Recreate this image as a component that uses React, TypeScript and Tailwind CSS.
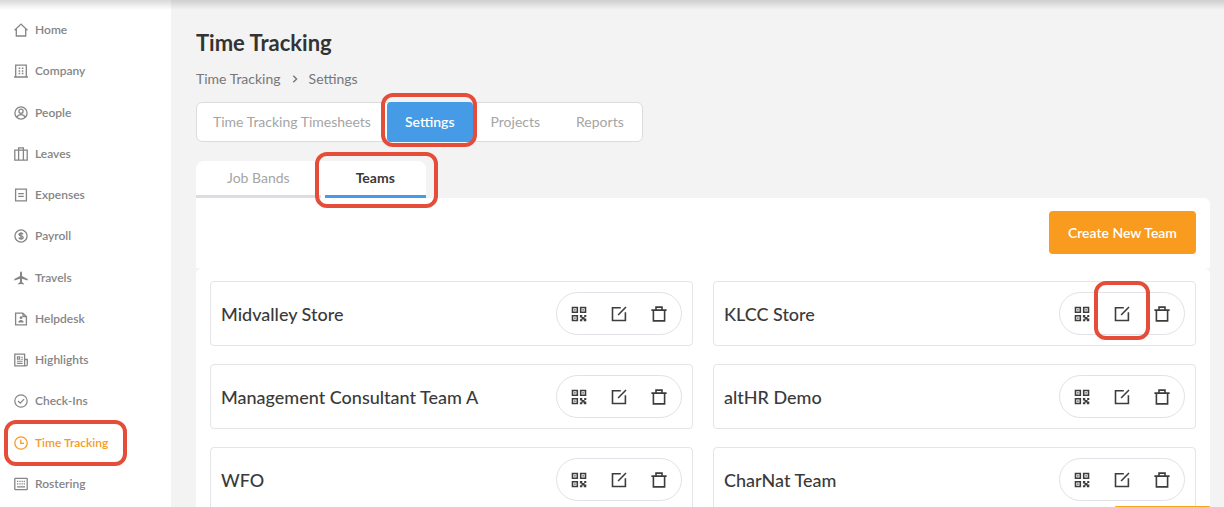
import type { ReactNode } from "react";

function NavIcon({ children }: { children: ReactNode }) {
  return (
    <svg viewBox="0 0 14 14" className="size-3.5 shrink-0" fill="none" stroke="currentColor" strokeWidth="1.3" aria-hidden="true">
      {children}
    </svg>
  );
}

const navItems: { label: string; icon: ReactNode }[] = [
  { label: "Home", icon: <path d="M.6 7.2 7 1.1l6.4 6.1M2.3 5.8v7.2h9.4V5.8" /> },
  {
    label: "Company",
    icon: (
      <>
        <path d="M1.7 13V1.2h10.6V13M0 13h14" />
        <path d="M4.6 4.2h1.6M7.8 4.2h1.6M4.6 6.9h1.6M7.8 6.9h1.6M4.6 9.6h1.6M7.8 9.6h1.6" strokeWidth="1.5" />
      </>
    ),
  },
  {
    label: "People",
    icon: (
      <>
        <circle cx="7" cy="7" r="6.1" />
        <circle cx="7" cy="5.2" r="2.1" />
        <path d="M2.9 11.3c.7-1.7 2.2-2.6 4.1-2.6s3.4.9 4.1 2.6" />
      </>
    ),
  },
  {
    label: "Leaves",
    icon: <path d="M.8 3.2h12.4v9.9H.8zM4.6 13V.9h4.8V13" />,
  },
  { label: "Expenses", icon: <path d="M1.6 1.1h10.8v11.8H1.6zM4.2 5.7h5.6M4.2 8.3h5.6" /> },
  {
    label: "Payroll",
    icon: (
      <>
        <circle cx="7" cy="7" r="6.1" />
        <path d="M9 5.2c-.3-.6-1-.9-2-.9-1.2 0-2 .5-2 1.3C5 7.5 9.1 6.3 9.1 8.4c0 .8-.9 1.3-2.1 1.3-1.1 0-1.9-.4-2.2-1.1M7 3.2v7.6" strokeWidth="1.4" />
      </>
    ),
  },
  {
    label: "Travels",
    icon: (
      <path
        d="M7 .5c.6 0 1 .7 1 1.6v3l5.7 3v1.3L8 7.8v3.3l1.8 1.3v1L7 12.9l-2.8.5v-1L6 11.1V7.8L.3 9.4V8.1l5.7-3v-3C6 1.2 6.4.5 7 .5z"
        fill="currentColor"
        stroke="none"
      />
    ),
  },
  {
    label: "Helpdesk",
    icon: (
      <>
        <path d="M8.8 1.1H1.6v11.8h10.8V4.6zM9 1v3.5h3.4" />
        <circle cx="7" cy="5.7" r="1.4" fill="currentColor" stroke="none" />
        <path d="M4.3 10.5c0-1.7 1.2-2.6 2.7-2.6s2.7.9 2.7 2.6z" fill="currentColor" stroke="none" />
      </>
    ),
  },
  {
    label: "Highlights",
    icon: (
      <>
        <path d="M10.6 12.8H.8V1.2h9.8zM10.6 6.5h2.7v4.7c0 1-.6 1.6-1.4 1.6h-1.3" />
        <path d="M3.4 3.9h2.3v2.2H3.4zM7.2 4.2h1.7M7.2 6.3h1.7M2.9 8.3h5.7M2.9 10.4h5.7" strokeWidth="1.1" />
      </>
    ),
  },
  {
    label: "Check-Ins",
    icon: (
      <>
        <circle cx="7" cy="7" r="6.2" strokeWidth="1.2" />
        <path d="m4.1 7 2.1 2.1 3.9-4" />
      </>
    ),
  },
  {
    label: "Time Tracking",
    icon: (
      <>
        <circle cx="7" cy="7" r="6.2" />
        <path d="M6.8 3.5v3.9h3.2" />
      </>
    ),
  },
  {
    label: "Rostering",
    icon: (
      <>
        <rect x=".8" y="1.4" width="12.4" height="11.2" rx=".6" />
        <path d="M3 4.4h1.3M5.3 4.4h1.3M7.5 4.4h1.3M9.7 4.4H11M3 6.9h1.3M5.3 6.9h1.3M7.5 6.9h1.3M9.7 6.9H11M3 9.9h8" />
      </>
    ),
  },
];

const teams = ["Midvalley Store", "KLCC Store", "Management Consultant Team A", "altHR Demo", "WFO", "CharNat Team"];

function QrIcon() {
  return (
    <svg viewBox="0 0 16 16" className="size-4" fill="none" stroke="currentColor" strokeWidth="1.6" aria-hidden="true">
      <path d="M1.5 1.5h4.8v4.8H1.5zM9.7 1.5h4.8v4.8H9.7zM1.5 9.7h4.8v4.8H1.5z" />
      <path
        d="M3.2 3.2h1.4v1.4H3.2zM11.4 3.2h1.4v1.4h-1.4zM3.2 11.4h1.4v1.4H3.2zM8.9 8.9h2.4v2.1h1.9V8.9h2.1v2.2h-1.7v1.5h1.7v2.7h-2.5v-1.8h-1.5v1.8H8.9v-2.1h1.6v-1.7H8.9z"
        fill="currentColor"
        stroke="none"
      />
    </svg>
  );
}

function EditIcon() {
  return (
    <svg viewBox="0 0 16 16" className="size-4" fill="none" stroke="currentColor" strokeWidth="1.6" aria-hidden="true">
      <path d="M9.8 1.7H1.5v12.8h12.9V6.2M7.1 9l7.9-8" />
    </svg>
  );
}

function TrashIcon() {
  return (
    <svg viewBox="0 0 16 16" className="size-4" fill="none" stroke="currentColor" strokeWidth="1.6" aria-hidden="true">
      <path d="M.4 4.1h15.2M2.4 4.1v10.8h11.2V4.1M5 4V1.1h6V4" />
    </svg>
  );
}

function Highlight({ className }: { className: string }) {
  return <span aria-hidden="true" className={`pointer-events-none absolute z-10 rounded-xl border-4 border-[#e34d39] ${className}`} />;
}

function TeamCard({ name, marked }: { name: string; marked: boolean }) {
  return (
    <li className="flex h-[65px] items-center justify-between rounded border border-[#e4e4e9] px-2.5">
      <h2 className="text-lg font-medium text-[#3a3a3a]">{name}</h2>
      <div className="flex h-[43px] items-center gap-6 rounded-full border border-[#e1e1e8] px-3.5 text-[#3d3d3d]">
        <button type="button" aria-label={`QR code for ${name}`}>
          <QrIcon />
        </button>
        <button type="button" aria-label={`Edit ${name}`} className="relative">
          <EditIcon />
          {marked && <Highlight className="-inset-x-5 -top-[25px] -bottom-[18px]" />}
        </button>
        <button type="button" aria-label={`Delete ${name}`}>
          <TrashIcon />
        </button>
      </div>
    </li>
  );
}

export default function App() {
  return (
    <div className="relative flex h-screen overflow-hidden bg-[#f3f3f3] font-['Lato',sans-serif]">
      <div className="absolute inset-x-0 top-0 z-20 h-2.5 bg-linear-to-b from-black/15 to-transparent" />

      <nav className="w-[171px] shrink-0 bg-white pt-5 pb-[13px] pl-3.5">
        <ul className="flex h-full flex-col justify-between">
          {navItems.map(({ label, icon }) => {
            const active = label === "Time Tracking";
            return (
              <li key={label} className="flex">
                <a
                  href="#"
                  aria-current={active ? "page" : undefined}
                  className={`relative flex h-5 items-center gap-[7px] text-xs font-semibold ${active ? "text-[#f79b1e]" : "text-[#858585]"}`}
                >
                  <NavIcon>{icon}</NavIcon>
                  {label}
                  {active && <Highlight className="-inset-y-[13px] -right-[19px] -left-2.5" />}
                </a>
              </li>
            );
          })}
        </ul>
      </nav>

      <main className="min-w-0 grow pt-7 pr-3.5 pl-[25px]">
        <h1 className="text-[22px] leading-[30px] font-bold text-[#333]">Time Tracking</h1>

        <div className="mt-[11px] flex h-5 items-center gap-2.5 text-sm text-[#777]">
          <a href="#">Time Tracking</a>
          <svg viewBox="0 0 8 8" className="size-2" fill="none" stroke="currentColor" strokeWidth="1.4" aria-hidden="true">
            <path d="m2.3.7 3.3 3.3-3.3 3.3" />
          </svg>
          <span>Settings</span>
        </div>

        <div className="mt-[13px] flex">
          <div className="flex h-10 items-center rounded-md border border-[#dcdcdc] bg-white text-sm text-[#a5a5a5]">
            <button type="button" className="px-4">Time Tracking Timesheets</button>
            <button type="button" className="relative h-10 rounded bg-[#459be6] px-[18px] font-semibold text-white">
              Settings
              <Highlight className="-top-[9px] -right-1 -bottom-[5px] -left-1.5" />
            </button>
            <button type="button" className="px-[18px]">Projects</button>
            <button type="button" className="px-[18px]">Reports</button>
          </div>
        </div>

        <div className="mt-[19px] flex text-sm" role="tablist">
          <button type="button" role="tab" aria-selected="false" className="h-[37px] rounded-tl-lg border-b-3 border-[#dcdce2] bg-white px-[31px] text-[#a5a5a5]">
            Job Bands
          </button>
          <div className="w-1 bg-white" />
          <button type="button" role="tab" aria-selected="true" className="relative h-[37px] rounded-tr-lg border-b-3 border-[#459be6] bg-white px-[31px] font-bold text-[#3a3a3a]">
            Teams
            <Highlight className="-top-[9px] -right-3 -bottom-[13px] -left-2.5" />
          </button>
        </div>

        <div className="flex justify-end rounded-tr-md bg-white px-3.5 pt-[13px] pb-3.5">
          <button type="button" className="h-[43px] rounded bg-[#f89b1e] px-[19px] text-sm font-semibold text-white">
            Create New Team
          </button>
        </div>

        <ul className="grid grid-cols-2 gap-x-5 gap-y-[18px] rounded-t-md bg-white px-3.5 pt-[13px] pb-8">
          {teams.map((name) => (
            <TeamCard key={name} name={name} marked={name === "KLCC Store"} />
          ))}
        </ul>
      </main>

      <div className="absolute right-3.5 bottom-0 h-px w-[95px] rounded-t-sm bg-[#f9a51a]" />
    </div>
  );
}
